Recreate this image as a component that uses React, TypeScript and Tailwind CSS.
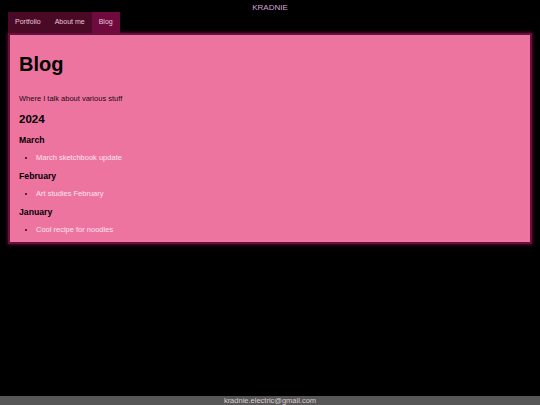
export default function App() {
  const sections = [
    { month: 'March', post: 'March sketchbook update' },
    { month: 'February', post: 'Art studies February' },
    { month: 'January', post: 'Cool recipe for noodles' },
  ]

  return (
    <div className="min-h-[405px] bg-black font-['Liberation_Sans',Arial,sans-serif] relative">
      <div className="h-[12px] text-center text-[8px] leading-[15px] text-[#d9a3d9]">KRADNIE</div>

      <div className="px-[8px]">
        <div className="flex h-[21px] text-[7px] text-[#e8c6d6]">
          <div className="bg-[#4a0a26] px-[7px] flex items-center">Portfolio</div>
          <div className="bg-[#4a0a26] px-[7px] flex items-center">About me</div>
          <div className="bg-[#6e0a3e] px-[7px] flex items-center">Blog</div>
        </div>

        <div className="bg-[#ee74a0] border-2 border-[#6a103c] shadow-[0_0_3px_1px_#4a0828] px-[9px] pt-[12px] pb-[7px] text-black">
          <h1 className="text-[20px] font-bold leading-[34px]">Blog</h1>
          <p className="text-[7.5px] mt-[13px] leading-[10px] text-[#1a0a10]">Where I talk about various stuff</p>
          <h2 className="text-[11.5px] font-bold mt-[8px] leading-[14px]">2024</h2>
          {sections.map((s, i) => (
            <div key={s.month}>
              <h3 className={i === 0 ? 'text-[8.7px] font-bold mt-[8px] leading-[12px]' : 'text-[8.7px] font-bold mt-[7px] leading-[12px]'}>
                {s.month}
              </h3>
              <ul className="list-disc pl-[17px] mt-[7px] text-[7.5px] leading-[10px] text-[#fde4ee] marker:text-[#2a0a18]">
                <li>{s.post}</li>
              </ul>
            </div>
          ))}
        </div>
      </div>

      <div className="absolute left-0 right-0 top-[396px] h-[9px] bg-[#575757] text-center text-[7.5px] leading-[9px] text-[#dccbd4] overflow-hidden">
        kradnie.electric@gmail.com
      </div>
    </div>
  )
}
